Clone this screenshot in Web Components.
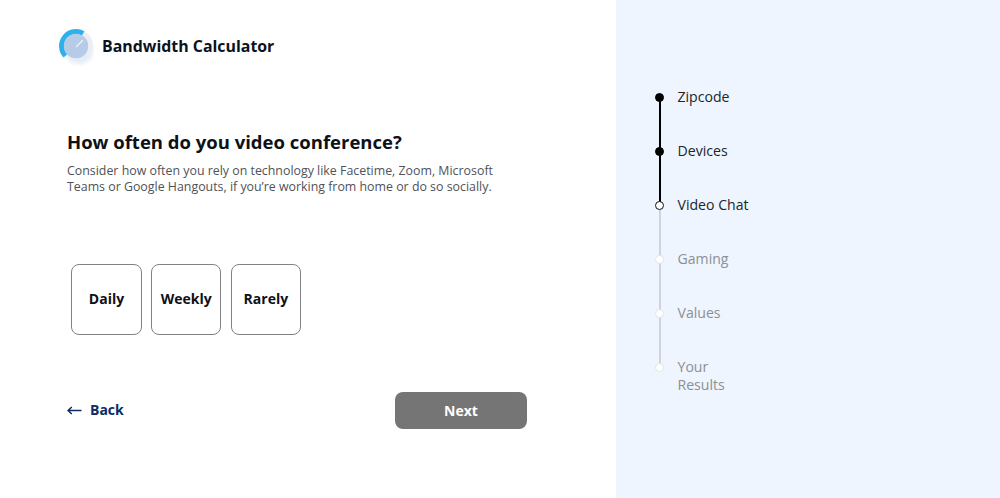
<!DOCTYPE html>
<html lang="en"><head><meta charset="utf-8"><title>Bandwidth Calculator</title>
<style>
html,body{margin:0;padding:0;height:100%;overflow:hidden;background:#fff;font-family:"Open Sans",sans-serif;color:#111}
</style></head><body>
<bw-app></bw-app>
<script>
function def(name, html){
  customElements.define(name, class extends HTMLElement{
    constructor(){super();this.attachShadow({mode:'open'}).innerHTML=html;}
  });
}
def('bw-logo',`<style>
:host{display:flex;align-items:center;gap:8px;height:50px;padding-left:6px}
svg{display:block;flex:none}
span{font:700 15.900px/22px "Open Sans",sans-serif;color:#0d1220}
</style>
<svg width="38" height="40" viewBox="0 0 38 40" aria-hidden="true">
<defs><filter id="b" x="-30%" y="-30%" width="160%" height="160%"><feGaussianBlur stdDeviation="2"/></filter><filter id="s"><feGaussianBlur stdDeviation=".5"/></filter></defs>
<ellipse cx="23" cy="25" rx="14" ry="13" fill="#dbe5f3" opacity=".75" filter="url(#b)"/>
<g filter="url(#s)">
<path d="M9.400 29.900A14.500 14.500 0 0 1 27.300 7.500" fill="none" stroke="#2db1ea" stroke-width="5"/>
<path d="M27.300 7.500A14.500 14.500 0 0 1 32.600 27.100" fill="none" stroke="#eceef2" stroke-width="5"/>
<circle cx="20" cy="20" r="12.200" fill="#b5cbe8"/>
<path d="M20.500 20.500L26.500 14.500" stroke="#eef3fa" stroke-width="1.400" stroke-linecap="round"/>
</g>
</svg><span><slot></slot></span>`);
def('bw-choice',`<style>
:host{display:flex;align-items:center;justify-content:center;box-sizing:border-box;width:70.400px;height:71px;padding-bottom:1px;border:1px solid #808286;border-radius:8px;background:#fff;font:700 14px/20px "Open Sans",sans-serif;color:#0e1116;cursor:pointer}
</style><slot></slot>`);
def('bw-question',`<style>
:host{display:block;padding-left:17px}
h1{margin:0;font:700 18.500px/26px "Open Sans",sans-serif;color:#0e1116}
p{margin:8px 0 0;font:400 12.380px/16px "Open Sans",sans-serif;color:#4f5257;width:440px}
</style><h1><slot name="title"></slot></h1><p><slot></slot></p>`);
def('bw-choices',`<style>
:host{display:flex;gap:9.300px;padding-left:21.300px}
</style><slot></slot>`);
def('bw-actions',`<style>
:host{display:flex;align-items:center;justify-content:space-between;padding-left:17px;width:460px;box-sizing:content-box}
a{display:flex;align-items:center;gap:8px;padding-bottom:1px;font:700 14px/20px "Open Sans",sans-serif;color:#0f2a63;text-decoration:none}
svg{display:block}
button{width:132px;height:37px;border:0;border-radius:8px;background:#757575;color:#fff;font:700 14px/20px "Open Sans",sans-serif;padding:0}
</style><a href="#"><svg width="15" height="9" viewBox="0 0 15 9" aria-hidden="true"><path d="M14.500 4.500H1.500M4.800 1L1 4.500L4.800 8" fill="none" stroke="#0f2a63" stroke-width="1.500"/></svg>Back</a><button>Next</button>`);
def('bw-step',`<style>
:host{display:grid;grid-template-columns:10px 1fr;column-gap:12.500px;min-height:54px;position:relative;font:400 14.100px/18.500px "Open Sans",sans-serif;color:var(--c,#8d8f93)}
.rail{position:relative}
.dot{position:absolute;left:0;top:5px;width:9px;height:9px;border-radius:50%;box-sizing:border-box;background:var(--d,#fff);border:1px solid var(--b,#e1e5ec);z-index:1}
.line{position:absolute;left:3.500px;top:9px;bottom:-9px;width:2px;background:var(--l,#d0d3db)}
:host([last]) .line{display:none}
.t{width:75px}
:host([state=done]){--c:#20252d;--d:#000;--b:#000;--l:#000}
:host([state=current]){--c:#20252d;--d:#fff;--b:#111}
</style><div class="rail"><div class="line"></div><div class="dot"></div></div><div class="t"><slot></slot></div>`);
def('bw-steps',`<style>
:host{display:block;padding:87.500px 0 0 39px;box-sizing:border-box}
</style><slot></slot>`);
def('bw-app',`<style>
:host{display:flex;width:1000px;height:498px;overflow:hidden}
.main{width:616px;box-sizing:border-box;padding:21px 0 0 50px;display:flex;flex-direction:column}
.side{flex:1;background:#eef5fe}
bw-question{margin-top:58px}
bw-choices{margin-top:69px}
bw-actions{margin-top:57px}
</style>
<div class="main">
<bw-logo>Bandwidth Calculator</bw-logo>
<bw-question><span slot="title">How often do you video conference?</span>Consider how often you rely on technology like Facetime, Zoom, Microsoft Teams or Google Hangouts, if you’re working from home or do so socially.</bw-question>
<bw-choices><bw-choice>Daily</bw-choice><bw-choice>Weekly</bw-choice><bw-choice>Rarely</bw-choice></bw-choices>
<bw-actions></bw-actions>
</div>
<bw-steps class="side"><bw-step state="done">Zipcode</bw-step><bw-step state="done">Devices</bw-step><bw-step state="current">Video Chat</bw-step><bw-step>Gaming</bw-step><bw-step>Values</bw-step><bw-step last>Your Results</bw-step></bw-steps>`);
</script>
</body></html>
